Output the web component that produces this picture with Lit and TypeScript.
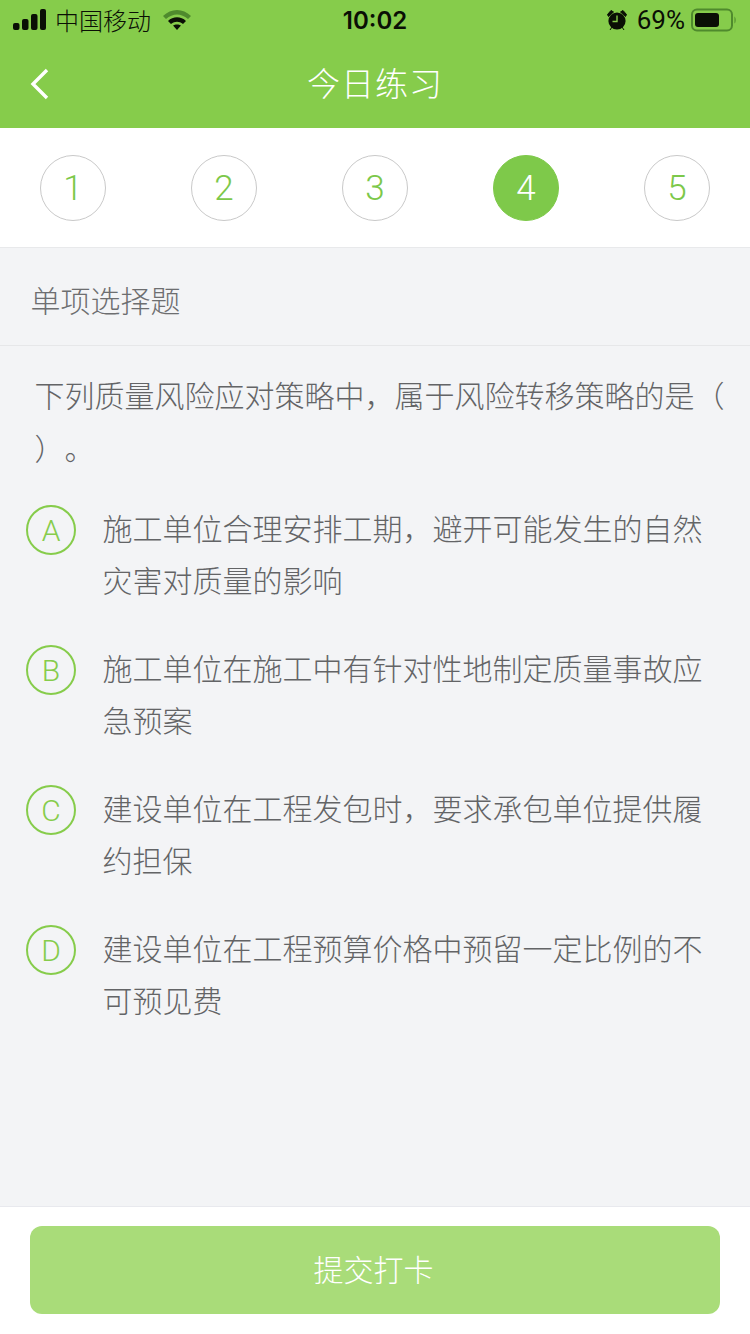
import { LitElement, html, css } from 'lit';
import { customElement } from 'lit/decorators.js';

const STEPS = ['1', '2', '3', '4', '5'];
const OPTIONS = [
  { key: 'A', text: '施工单位合理安排工期，避开可能发生的自然灾害对质量的影响' },
  { key: 'B', text: '施工单位在施工中有针对性地制定质量事故应急预案' },
  { key: 'C', text: '建设单位在工程发包时，要求承包单位提供履约担保' },
  { key: 'D', text: '建设单位在工程预算价格中预留一定比例的不可预见费' },
];

@customElement('app-root')
export class AppRoot extends LitElement {
  static styles = css`
    :host {
      display: flex;
      flex-direction: column;
      min-height: 1334px;
      background: #f3f4f6;
      font-family: 'Noto Sans CJK SC', 'Noto Sans', sans-serif;
    }

    .top {
      background: #86cc4b;
    }

    .status {
      height: 40px;
      display: grid;
      grid-template-columns: 1fr auto 1fr;
      align-items: center;
      padding: 0 13px;
      color: #0a0f05;
    }

    .status-left,
    .status-right {
      display: flex;
      align-items: center;
    }

    .status-right {
      justify-content: flex-end;
    }

    .carrier {
      font-size: 24px;
      font-weight: 300;
      margin-left: 9px;
      margin-right: 11px;
      line-height: 38px;
    }

    .time {
      font-family: Inter, sans-serif;
      font-size: 24px;
      font-weight: 600;
      padding-top: 1px;
    }

    .percent {
      font-family: Roboto, sans-serif;
      font-size: 26px;
      font-weight: 400;
      margin: 0 6px 0 9px;
    }

    .nav {
      height: 88px;
      display: grid;
      grid-template-columns: 1fr auto 1fr;
      align-items: center;
      padding: 0 30px;
    }

    .title {
      color: #fff;
      font-size: 33px;
      font-weight: 300;
      letter-spacing: 1px;
      line-height: 84px;
      padding-bottom: 4px;
    }

    .steps {
      display: flex;
      justify-content: space-between;
      padding: 27px 40px 26px;
      background: #fff;
      border-bottom: 1px solid #e8e9eb;
    }

    .step {
      box-sizing: border-box;
      width: 66px;
      height: 66px;
      border-radius: 50%;
      border: 1px solid #c9c9c9;
      display: flex;
      align-items: center;
      justify-content: center;
      color: #7cc84a;
      font-family: Roboto, sans-serif;
      font-size: 35px;
      font-weight: 300;
    }

    .step.active {
      background: #7ec94a;
      border-color: #7ec94a;
      color: #fff;
    }

    .kind {
      height: 98px;
      box-sizing: border-box;
      border-bottom: 1px solid #e6e7e9;
      padding-left: 30.5px;
      line-height: 102px;
      font-size: 30px;
      font-weight: 300;
      color: #6d6e70;
    }

    main {
      flex: 1;
      color: #636466;
      font-size: 30px;
      font-weight: 300;
      text-spacing-trim: space-all;
    }

    .question {
      padding: 22px 0 0 34.5px;
      line-height: 53px;
    }

    .options {
      display: flex;
      flex-direction: column;
      gap: 36px;
      padding: 27px 0 0 26px;
    }

    .option {
      display: flex;
      gap: 26.5px;
    }

    .key {
      box-sizing: border-box;
      flex: none;
      width: 50px;
      height: 50px;
      margin-top: 4px;
      padding-top: 1px;
      border-radius: 50%;
      border: 2px solid #86cc4b;
      display: flex;
      align-items: center;
      justify-content: center;
      color: #86cc4b;
      font-family: Roboto, sans-serif;
      font-size: 30px;
      font-weight: 300;
    }

    .option-text {
      width: 601px;
      line-height: 52px;
    }

    footer {
      background: #fff;
      border-top: 1px solid #e8e9ee;
      padding: 19px 30px 20px;
    }

    .submit {
      box-sizing: border-box;
      height: 88px;
      padding: 0 3px 4px 0;
      border-radius: 12px;
      background: #a9dc79;
      color: #fff;
      font-size: 30px;
      font-weight: 300;
      display: flex;
      align-items: center;
      justify-content: center;
    }
  `;

  render() {
    return html`
      <div class="top">
        <div class="status">
          <div class="status-left">
            <svg width="33" height="22" viewBox="0 0 33 22" fill="currentColor">
              <rect x="0" y="14" width="6.5" height="7" rx="2" />
              <rect x="9" y="10" width="6.5" height="11" rx="2" />
              <rect x="18" y="5" width="6.5" height="16" rx="2" />
              <rect x="27" y="0" width="6" height="21" rx="2" />
            </svg>
            <span class="carrier">中国移动</span>
            <svg width="30" height="22" viewBox="0 0 30 22">
              <path d="M1 7 C9 -1 21 -1 29 7 L26 10 C19 4 11 4 4 10 Z" fill="#4f8a2d" />
              <path d="M6 12 C11 7 19 7 24 12 L21 15 C17 12 13 12 9 15 Z M11 16.5 C13 15 17 15 19 16.5 L15 21 Z" fill="currentColor" />
            </svg>
          </div>
          <span class="time">10:02</span>
          <div class="status-right">
            <svg width="22" height="22" viewBox="0 0 22 22">
              <circle cx="11" cy="12" r="8.6" fill="currentColor" />
              <path d="M1.5 5.5 L5 1.5 L7.5 3 L2.5 7.5 Z M20.5 5.5 L17 1.5 L14.5 3 L19.5 7.5 Z M4 21 L6 18 M18 21 L16 18" fill="currentColor" stroke="currentColor" />
              <path d="M11 6.5 V12.5 H6.5" fill="none" stroke="#86cc4b" stroke-width="1.4" />
            </svg>
            <span class="percent">69%</span>
            <svg width="46" height="24" viewBox="0 0 46 24">
              <rect x="1" y="1.5" width="40" height="21" rx="5" fill="none" stroke="#4f8a2d" stroke-width="2" />
              <rect x="4" y="5" width="24" height="14" rx="3" fill="currentColor" />
              <path d="M43.5 8.5 C45 9.5 45 14.5 43.5 15.5 Z" fill="#4f8a2d" />
            </svg>
          </div>
        </div>
        <div class="nav">
          <svg width="20" height="32" viewBox="0 0 20 32" fill="none">
            <path d="M17 2 L3 16 L17 30" stroke="#fff" stroke-width="3.4" />
          </svg>
          <span class="title">今日练习</span>
        </div>
      </div>

      <div class="steps">
        ${STEPS.map((s) => html`<div class="step ${s === '4' ? 'active' : ''}">${s}</div>`)}
      </div>

      <div class="kind">单项选择题</div>

      <main>
        <div class="question">下列质量风险应对策略中，属于风险转移策略的是（<br />）。</div>
        <div class="options">
          ${OPTIONS.map(
            (o) => html`
              <div class="option">
                <div class="key">${o.key}</div>
                <div class="option-text">${o.text}</div>
              </div>
            `
          )}
        </div>
      </main>

      <footer>
        <div class="submit">提交打卡</div>
      </footer>
    `;
  }
}
